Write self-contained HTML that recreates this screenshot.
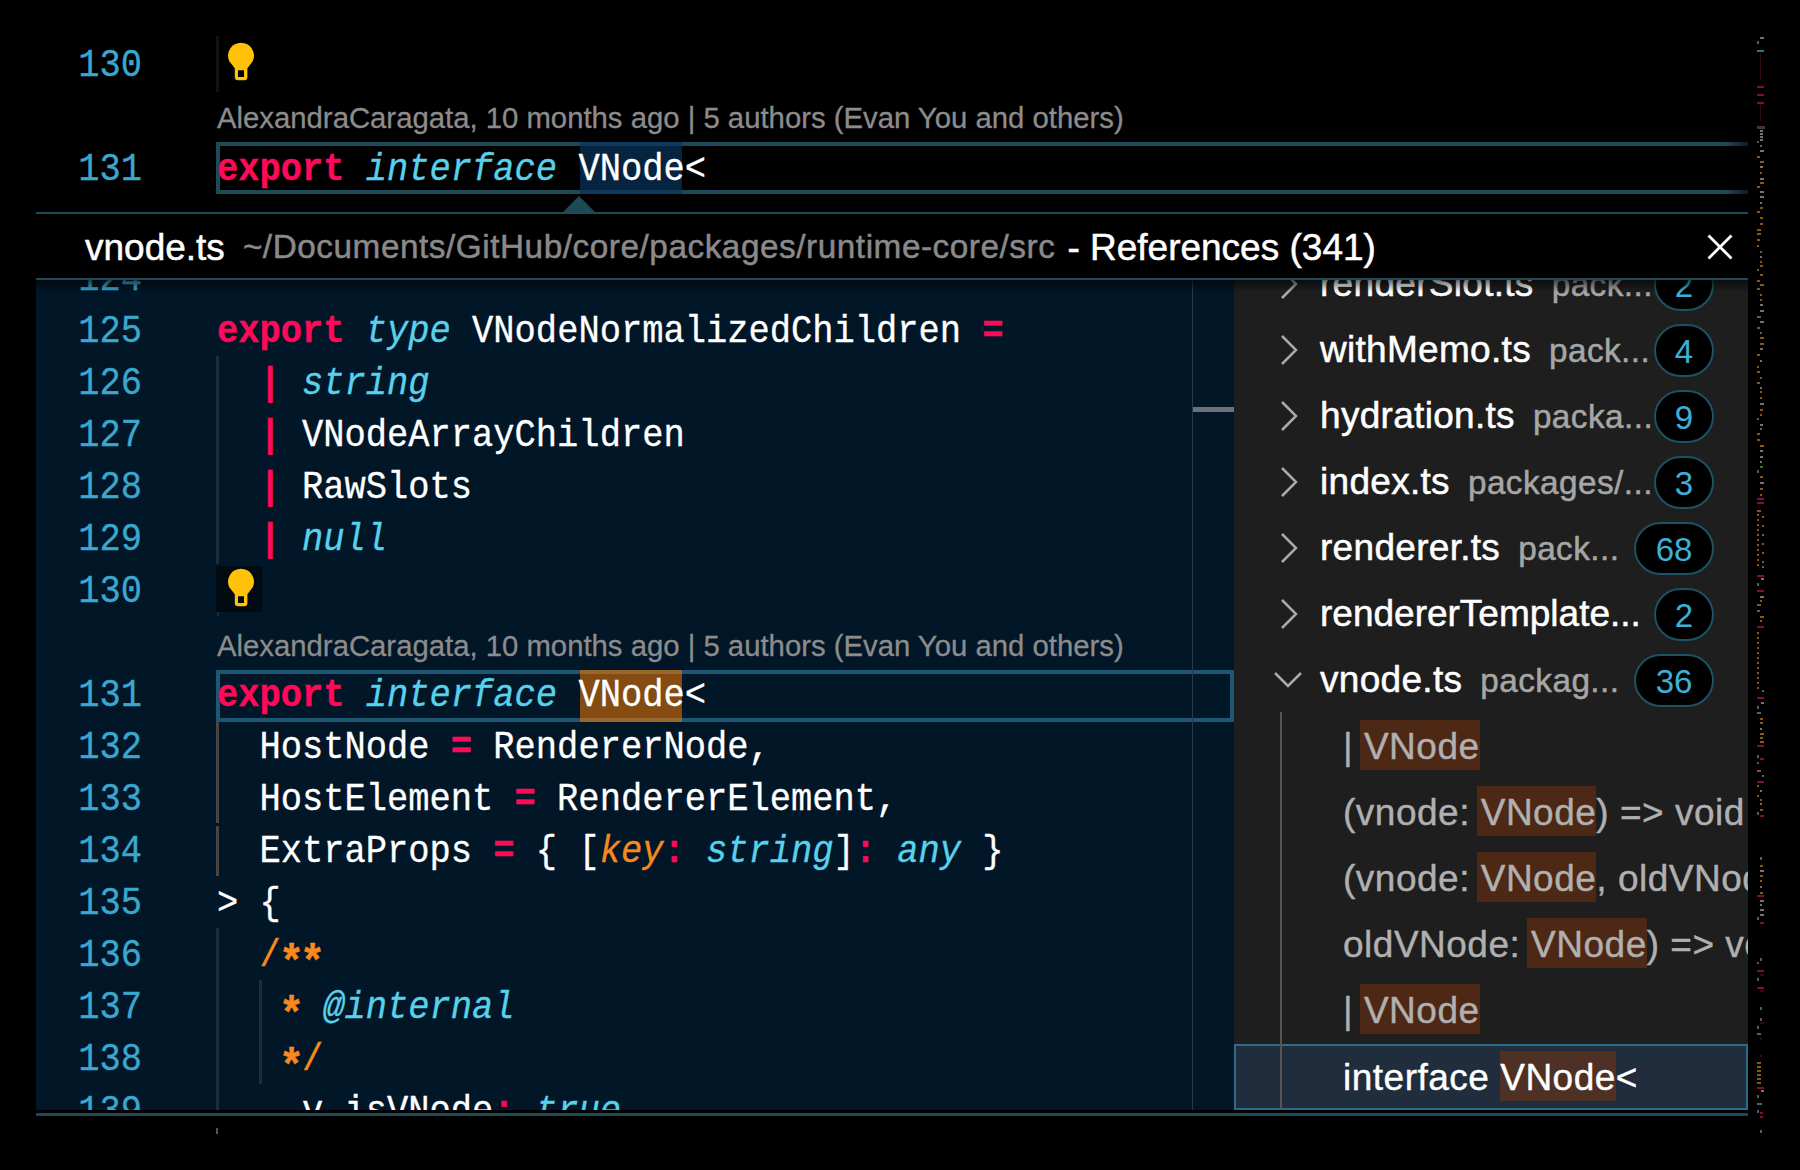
<!DOCTYPE html>
<html><head><meta charset="utf-8">
<style>
*{margin:0;padding:0;box-sizing:border-box}
html,body{width:1800px;height:1170px;background:#000;overflow:hidden;position:relative}
.mono{font-family:"Liberation Mono",monospace;font-size:35.43px;white-space:pre;-webkit-text-stroke:0.3px currentColor;transform-origin:0 11.8px;transform:translateY(0.8px) scaleY(1.108)}
.sans{font-family:"Liberation Sans",sans-serif;white-space:pre;-webkit-text-stroke:0.5px currentColor}
.ln{position:absolute;left:0;width:142px;text-align:right;color:#3ba7cf;height:52px;line-height:52px}
.cl{position:absolute;left:217px;height:52px;line-height:52px;color:#fff}
.k{color:#ff0a5a;font-weight:bold}
.i{color:#58d1eb;font-style:italic}
.p{color:#ff0a5a;font-weight:bold}
.o{color:#f7891e}
.ast{display:inline-block;font-weight:bold;transform:translateY(8px) scale(1.2)}
.oi{color:#f7891e;font-style:italic}
.abs{position:absolute}
.lens{-webkit-text-stroke:0.3px currentColor;position:absolute;left:217px;font-family:"Liberation Sans",sans-serif;font-size:29.3px;color:#8c8c8c;white-space:pre;height:52px;line-height:52px}
.guide{position:absolute;width:2px;background:#1f2c36}
.row{position:absolute;left:1235px;width:513px;height:66px}
.chev{position:absolute;left:1281px;width:16px;height:28px}
.fname{-webkit-text-stroke:0.5px currentColor;position:absolute;left:1320px;height:66px;line-height:66px;font-size:37px;letter-spacing:0.3px;color:#fff;font-family:"Liberation Sans",sans-serif;white-space:pre}
.desc{font-size:33.3px;color:#a6a6a6;margin-left:18px;letter-spacing:0.45px}
.badge{position:absolute;height:53px;border:2px solid #1d5264;border-radius:27px;background:#000;color:#3db0d8;font-family:"Liberation Sans",sans-serif;font-size:33px;line-height:51px;text-align:center;padding:0;min-width:58px}
.child{-webkit-text-stroke:0.4px currentColor;letter-spacing:0.5px;position:absolute;left:1343px;height:66px;line-height:68px;font-size:37px;color:#b0b0b0;font-family:"Liberation Sans",sans-serif;white-space:pre}
.hl{background:#4d2815;display:inline-block;height:50px;line-height:53px;vertical-align:top;margin-top:7px;margin-left:-4px;padding-left:4px}
</style></head><body>

<!-- top editor -->
<div class="guide" style="left:216px;top:36px;width:3px;height:56px;background:#121212"></div><div class="abs" style="left:216px;top:1128px;width:2px;height:6px;background:#555"></div>
<div class="mono ln" style="top:38px">130</div>
<svg class="abs" style="left:226px;top:40px" width="30" height="42" viewBox="0 0 30 42"><path fill-rule="evenodd" fill="#ffc10a" d="M3.1,21 A13,13 0 1 1 26.9,21 L21.4,28.3 L21.4,37.2 Q21.4,40.2 18.4,40.2 L11.8,40.2 Q8.8,40.2 8.8,37.2 L8.8,28.3 Z M12,30.2 H18 V37 H12 Z"/></svg>
<div class="lens" style="top:92px">AlexandraCaragata, 10 months ago | 5 authors (Evan You and others)</div>
<div class="abs" style="left:216px;top:142px;width:4px;height:52px;background:#1e4a58"></div><div class="abs" style="left:216px;top:142px;width:1532px;height:4px;background:linear-gradient(90deg,#1e4a58 0,#1e4a58 1510px,#0b1c22 1532px)"></div><div class="abs" style="left:216px;top:190px;width:1532px;height:4px;background:linear-gradient(90deg,#1e4a58 0,#1e4a58 1510px,#0b1c22 1532px)"></div>
<div class="abs" style="left:580px;top:142px;width:102px;height:52px;background:#06243f;border-top:4px solid #0e3a5e;border-bottom:4px solid #0e3a5e"></div>
<div class="mono ln" style="top:142px">131</div>
<div class="mono cl" style="top:142px"><span class="k">export</span> <span class="i">interface</span> VNode&lt;</div>

<!-- peek widget borders -->
<svg class="abs" style="left:562px;top:196px" width="34" height="17"><path d="M0 17 L17 0 L34 17 Z" fill="#1e4a58"/></svg>
<div class="abs" style="left:36px;top:212px;width:1712px;height:2px;background:#1e4a58"></div>
<div class="abs" style="left:36px;top:214px;width:1712px;height:64px;background:#000"></div>
<div class="abs" style="left:36px;top:278px;width:1712px;height:2px;background:#1e4a58"></div>
<div class="abs sans" style="left:85px;top:215px;height:64px;line-height:66px;font-size:37px;color:#fff">vnode.ts<span style="font-size:33.3px;color:#8a8a8a;margin-left:18px;letter-spacing:0.55px;position:relative;top:-2px">~/Documents/GitHub/core/packages/runtime-core/src</span><span style="margin-left:12px">- References (341)</span></div>
<svg class="abs" style="left:1707px;top:234px" width="26" height="26"><path d="M1.5 1.5 L24.5 24.5 M24.5 1.5 L1.5 24.5" stroke="#fff" stroke-width="2.8"/></svg>

<!-- peek body -->
<div class="abs" style="left:36px;top:280px;width:1198px;height:830px;background:#011627;overflow:hidden" id="peek">
<div class="abs" style="left:-36px;top:-280px;width:1800px;height:1170px">
<div class="guide" style="left:216px;width:3px;top:356px;height:208px"></div>
<div class="guide" style="left:217px;top:612px;height:4px"></div>
<div class="mono ln" style="top:252px">124</div>
<div class="mono ln" style="top:304px">125</div>
<div class="mono cl" style="top:304px"><span class="k">export</span> <span class="i">type</span> VNodeNormalizedChildren <span class="p">=</span></div>
<div class="mono ln" style="top:356px">126</div>
<div class="mono cl" style="top:356px">  <span class="p">|</span> <span class="i">string</span></div>
<div class="mono ln" style="top:408px">127</div>
<div class="mono cl" style="top:408px">  <span class="p">|</span> VNodeArrayChildren</div>
<div class="mono ln" style="top:460px">128</div>
<div class="mono cl" style="top:460px">  <span class="p">|</span> RawSlots</div>
<div class="mono ln" style="top:512px">129</div>
<div class="mono cl" style="top:512px">  <span class="p">|</span> <span class="i">null</span></div>
<div class="mono ln" style="top:564px">130</div>
<div class="abs" style="left:216px;top:566px;width:46px;height:46px;background:#020b12"></div>
<svg class="abs" style="left:226px;top:566px" width="30" height="42" viewBox="0 0 30 42"><path fill-rule="evenodd" fill="#ffc10a" d="M3.1,21 A13,13 0 1 1 26.9,21 L21.4,28.3 L21.4,37.2 Q21.4,40.2 18.4,40.2 L11.8,40.2 Q8.8,40.2 8.8,37.2 L8.8,28.3 Z M12,30.2 H18 V37 H12 Z"/></svg>
<div class="lens" style="top:620px">AlexandraCaragata, 10 months ago | 5 authors (Evan You and others)</div>
<div class="abs" style="left:216px;top:670px;width:1018px;height:52px;border:4px solid #1f5673"></div>
<div class="abs" style="left:580px;top:670px;width:102px;height:52px;background:#844c12;border-top:4px solid #98682a;border-bottom:4px solid #98682a"></div>
<div class="mono ln" style="top:668px">131</div>
<div class="mono cl" style="top:668px"><span class="k">export</span> <span class="i">interface</span> VNode&lt;</div>
<div class="guide" style="left:216px;width:3px;top:722px;height:101px;background:#4a4545"></div><div class="guide" style="left:216px;width:3px;top:826px;height:50px;background:#4a4545"></div>
<div class="mono ln" style="top:720px">132</div>
<div class="mono cl" style="top:720px">  HostNode <span class="p">=</span> RendererNode,</div>
<div class="mono ln" style="top:772px">133</div>
<div class="mono cl" style="top:772px">  HostElement <span class="p">=</span> RendererElement,</div>
<div class="mono ln" style="top:824px">134</div>
<div class="mono cl" style="top:824px">  ExtraProps <span class="p">=</span> { [<span class="oi">key</span><span class="p">:</span> <span class="i">string</span>]<span class="p">:</span> <span class="i">any</span> }</div>
<div class="mono ln" style="top:876px">135</div>
<div class="mono cl" style="top:876px">&gt; {</div>
<div class="guide" style="left:216px;width:3px;top:928px;height:200px"></div>
<div class="guide" style="left:259px;width:3px;top:980px;height:104px"></div>
<div class="mono ln" style="top:928px">136</div>
<div class="mono cl" style="top:928px">  <span class="o">/<span class="ast">*</span><span class="ast">*</span></span></div>
<div class="mono ln" style="top:980px">137</div>
<div class="mono cl" style="top:980px">   <span class="o"><span class="ast">*</span></span> <span class="i">@internal</span></div>
<div class="mono ln" style="top:1032px">138</div>
<div class="mono cl" style="top:1032px">   <span class="o"><span class="ast">*</span>/</span></div>
<div class="mono ln" style="top:1084px">139</div>
<div class="mono cl" style="top:1084px">  __v_isVNode<span class="p">:</span> <span class="i">true</span></div>
<div class="abs" style="left:1192px;top:280px;width:1px;height:830px;background:#2a3a44"></div>
<div class="abs" style="left:1193px;top:407px;width:41px;height:5px;background:#6b7178"></div>
</div>
<div class="abs" style="left:0;top:0;width:1199px;height:12px;background:linear-gradient(#0009,#0000)"></div>
</div>
<div class="abs" style="left:1234px;top:280px;width:514px;height:830px;background:#1e1e1e;overflow:hidden" id="tree">
<div class="abs" style="left:-1234px;top:-280px;width:1800px;height:1170px">
<svg class="abs" style="left:1279px;top:269px" width="20" height="30"><path d="M3 1 L17 15 L3 29" fill="none" stroke="#aaa" stroke-width="2.5"/></svg>
<div class="fname" style="top:251px">renderSlot.ts<span class="desc">pack...</span></div>
<div class="badge" style="left:1654px;top:258px;width:60px">2</div>
<svg class="abs" style="left:1279px;top:335px" width="20" height="30"><path d="M3 1 L17 15 L3 29" fill="none" stroke="#aaa" stroke-width="2.5"/></svg>
<div class="fname" style="top:317px">withMemo.ts<span class="desc">pack...</span></div>
<div class="badge" style="left:1654px;top:324px;width:60px">4</div>
<svg class="abs" style="left:1279px;top:401px" width="20" height="30"><path d="M3 1 L17 15 L3 29" fill="none" stroke="#aaa" stroke-width="2.5"/></svg>
<div class="fname" style="top:383px">hydration.ts<span class="desc">packa...</span></div>
<div class="badge" style="left:1654px;top:390px;width:60px">9</div>
<svg class="abs" style="left:1279px;top:467px" width="20" height="30"><path d="M3 1 L17 15 L3 29" fill="none" stroke="#aaa" stroke-width="2.5"/></svg>
<div class="fname" style="top:449px">index.ts<span class="desc">packages/...</span></div>
<div class="badge" style="left:1654px;top:456px;width:60px">3</div>
<svg class="abs" style="left:1279px;top:533px" width="20" height="30"><path d="M3 1 L17 15 L3 29" fill="none" stroke="#aaa" stroke-width="2.5"/></svg>
<div class="fname" style="top:515px">renderer.ts<span class="desc">pack...</span></div>
<div class="badge" style="left:1634px;top:522px;width:80px">68</div>
<svg class="abs" style="left:1279px;top:599px" width="20" height="30"><path d="M3 1 L17 15 L3 29" fill="none" stroke="#aaa" stroke-width="2.5"/></svg>
<div class="fname" style="top:581px;letter-spacing:0">rendererTemplate...</div>
<div class="badge" style="left:1654px;top:588px;width:60px">2</div>
<svg class="abs" style="left:1273px;top:671px" width="30" height="18"><path d="M2 2 L15 15 L28 2" fill="none" stroke="#aaa" stroke-width="2.5"/></svg>
<div class="fname" style="top:647px">vnode.ts<span class="desc">packag...</span></div>
<div class="badge" style="left:1634px;top:654px;width:80px">36</div>
<div class="abs" style="left:1234px;top:1044px;width:514px;height:66px;background:#1f2d3d;border:2px solid #2c6a8c"></div>
<div class="abs" style="left:1280px;top:712px;width:2px;height:398px;background:#555"></div>
<div class="child" style="top:713px">| <span class="hl">VNode</span></div>
<div class="child" style="top:779px">(vnode: <span class="hl">VNode</span>) =&gt; void</div>
<div class="child" style="top:845px">(vnode: <span class="hl">VNode</span>, oldVNode</div>
<div class="child" style="top:911px">oldVNode: <span class="hl">VNode</span>) =&gt; void</div>
<div class="child" style="top:977px">| <span class="hl">VNode</span></div>
<div class="child" style="top:1044px;color:#fff">interface <span class="hl" style="background:#4f3024;margin-left:0;padding-left:0">VNode</span>&lt;</div>
</div>
<div class="abs" style="left:0;top:0;width:514px;height:12px;background:linear-gradient(#0009,#0000)"></div>
</div>
<div class="abs" style="left:36px;top:1113px;width:1712px;height:3px;background:#1e4a58"></div>

<svg class="abs" style="left:1750px;top:0;opacity:0.75;filter:blur(0.4px)" width="20" height="1170" viewBox="1750 0 20 1170"><rect x="1760" y="37" width="4" height="2" fill="#9a9a9a"/><rect x="1757" y="41" width="2" height="3" fill="#777"/><rect x="1757" y="50" width="7" height="2" fill="#3a9ab8"/><rect x="1760" y="53" width="1" height="27" fill="#4a0a20"/><rect x="1757" y="86" width="7" height="2" fill="#b0104a"/><rect x="1757" y="94" width="7" height="2" fill="#b0104a"/><rect x="1757" y="102" width="7" height="2" fill="#b0104a"/><rect x="1760" y="104" width="1" height="17" fill="#4a0a20"/><rect x="1757" y="126" width="8" height="3" fill="#6a3a6a"/><rect x="1760" y="130" width="3" height="2" fill="#9a9a9a"/><rect x="1760" y="133" width="3" height="2" fill="#9a9a9a"/><rect x="1760" y="136" width="3" height="2" fill="#9a9a9a"/><rect x="1760" y="139" width="3" height="2" fill="#9a9a9a"/><rect x="1757" y="141" width="2" height="2" fill="#777"/><rect x="1760" y="145" width="2" height="2" fill="#b8741f"/><rect x="1760" y="150" width="4" height="2" fill="#9a9a9a"/><rect x="1757" y="156" width="3" height="2" fill="#b8741f"/><rect x="1760" y="161" width="4" height="2" fill="#b8741f"/><rect x="1760" y="166" width="3" height="2" fill="#9a9a9a"/><rect x="1760" y="172" width="2" height="2" fill="#b8741f"/><rect x="1760" y="178" width="4" height="2" fill="#9a9a9a"/><rect x="1760" y="182" width="4" height="2" fill="#b8741f"/><rect x="1757" y="186" width="3" height="2" fill="#b8741f"/><rect x="1760" y="191" width="4" height="2" fill="#9a9a9a"/><rect x="1760" y="196" width="4" height="2" fill="#9a9a9a"/><rect x="1760" y="202" width="2" height="2" fill="#9a9a9a"/><rect x="1760" y="207" width="3" height="2" fill="#b8741f"/><rect x="1757" y="211" width="3" height="2" fill="#b8741f"/><rect x="1760" y="217" width="3" height="2" fill="#b8741f"/><rect x="1760" y="223" width="3" height="2" fill="#b8741f"/><rect x="1757" y="229" width="4" height="2" fill="#b8741f"/><rect x="1757" y="233" width="4" height="2" fill="#b8741f"/><rect x="1757" y="239" width="3" height="2" fill="#b8741f"/><rect x="1757" y="245" width="2" height="2" fill="#b8741f"/><rect x="1760" y="251" width="2" height="2" fill="#b8741f"/><rect x="1760" y="256" width="2" height="2" fill="#9a9a9a"/><rect x="1760" y="261" width="2" height="2" fill="#b8741f"/><rect x="1760" y="265" width="3" height="2" fill="#b8741f"/><rect x="1757" y="269" width="2" height="2" fill="#b8741f"/><rect x="1760" y="274" width="3" height="2" fill="#b8741f"/><rect x="1757" y="280" width="3" height="2" fill="#b8741f"/><rect x="1760" y="284" width="4" height="2" fill="#b8741f"/><rect x="1757" y="288" width="3" height="2" fill="#b8741f"/><rect x="1760" y="294" width="2" height="2" fill="#b8741f"/><rect x="1760" y="299" width="2" height="2" fill="#b8741f"/><rect x="1760" y="304" width="3" height="2" fill="#9a9a9a"/><rect x="1760" y="310" width="4" height="2" fill="#9a9a9a"/><rect x="1757" y="316" width="4" height="2" fill="#b8741f"/><rect x="1760" y="321" width="4" height="2" fill="#9a9a9a"/><rect x="1757" y="327" width="3" height="2" fill="#b8741f"/><rect x="1760" y="332" width="2" height="2" fill="#b8741f"/><rect x="1760" y="337" width="4" height="2" fill="#b8741f"/><rect x="1760" y="343" width="4" height="2" fill="#b8741f"/><rect x="1760" y="348" width="3" height="2" fill="#9a9a9a"/><rect x="1757" y="354" width="3" height="2" fill="#b8741f"/><rect x="1760" y="360" width="2" height="2" fill="#9a9a9a"/><rect x="1757" y="366" width="2" height="2" fill="#b8741f"/><rect x="1757" y="371" width="3" height="2" fill="#b8741f"/><rect x="1760" y="377" width="2" height="2" fill="#b8741f"/><rect x="1757" y="382" width="3" height="2" fill="#b8741f"/><rect x="1760" y="387" width="2" height="2" fill="#9a9a9a"/><rect x="1760" y="391" width="2" height="2" fill="#b8741f"/><rect x="1760" y="397" width="2" height="2" fill="#b8741f"/><rect x="1760" y="403" width="4" height="2" fill="#9a9a9a"/><rect x="1760" y="409" width="3" height="2" fill="#b8741f"/><rect x="1760" y="414" width="2" height="2" fill="#b8741f"/><rect x="1757" y="418" width="2" height="2" fill="#b8741f"/><rect x="1760" y="424" width="3" height="2" fill="#9a9a9a"/><rect x="1760" y="428" width="2" height="2" fill="#b8741f"/><rect x="1757" y="433" width="3" height="2" fill="#b8741f"/><rect x="1757" y="439" width="3" height="2" fill="#b8741f"/><rect x="1760" y="445" width="4" height="2" fill="#b8741f"/><rect x="1760" y="450" width="3" height="2" fill="#9a9a9a"/><rect x="1760" y="456" width="3" height="2" fill="#9a9a9a"/><rect x="1760" y="461" width="2" height="2" fill="#9a9a9a"/><rect x="1760" y="466" width="3" height="2" fill="#5a9a20"/><rect x="1757" y="470" width="2" height="3" fill="#777"/><rect x="1760" y="476" width="3" height="2" fill="#b8741f"/><rect x="1760" y="482" width="4" height="2" fill="#9a9a9a"/><rect x="1760" y="488" width="3" height="2" fill="#b8741f"/><rect x="1760" y="494" width="2" height="2" fill="#b8741f"/><rect x="1757" y="498" width="7" height="2" fill="#b0104a"/><rect x="1757" y="502" width="7" height="2" fill="#b0104a"/><rect x="1757" y="510" width="4" height="2" fill="#b8741f"/><rect x="1757" y="514" width="2" height="2" fill="#b8741f"/><rect x="1757" y="519" width="2" height="2" fill="#b8741f"/><rect x="1757" y="524" width="2" height="2" fill="#b8741f"/><rect x="1757" y="529" width="2" height="2" fill="#b8741f"/><rect x="1757" y="534" width="2" height="2" fill="#b8741f"/><rect x="1757" y="539" width="2" height="2" fill="#b8741f"/><rect x="1757" y="544" width="2" height="2" fill="#b8741f"/><rect x="1757" y="549" width="2" height="2" fill="#b8741f"/><rect x="1757" y="554" width="2" height="2" fill="#b8741f"/><rect x="1757" y="559" width="2" height="2" fill="#b8741f"/><rect x="1757" y="564" width="2" height="2" fill="#b8741f"/><rect x="1762" y="516" width="2" height="2" fill="#b8741f"/><rect x="1762" y="525" width="2" height="2" fill="#b8741f"/><rect x="1762" y="534" width="2" height="2" fill="#b8741f"/><rect x="1762" y="543" width="2" height="2" fill="#b8741f"/><rect x="1762" y="552" width="2" height="2" fill="#b8741f"/><rect x="1762" y="561" width="2" height="2" fill="#b8741f"/><rect x="1762" y="566" width="2" height="2" fill="#3a9ab8"/><rect x="1757" y="575" width="7" height="2" fill="#b0104a"/><rect x="1761" y="578" width="3" height="2" fill="#9a9a9a"/><rect x="1757" y="583" width="2" height="3" fill="#777"/><rect x="1757" y="590" width="7" height="2" fill="#b0104a"/><rect x="1760" y="596" width="4" height="2" fill="#9a9a9a"/><rect x="1760" y="600" width="2" height="2" fill="#b8741f"/><rect x="1757" y="604" width="4" height="2" fill="#b8741f"/><rect x="1757" y="610" width="3" height="2" fill="#b8741f"/><rect x="1760" y="616" width="4" height="2" fill="#b8741f"/><rect x="1760" y="620" width="2" height="2" fill="#b8741f"/><rect x="1757" y="626" width="7" height="2" fill="#b0104a"/><rect x="1757" y="632" width="2" height="2" fill="#b8741f"/><rect x="1757" y="637" width="2" height="2" fill="#b8741f"/><rect x="1757" y="642" width="2" height="2" fill="#b8741f"/><rect x="1757" y="647" width="2" height="2" fill="#b8741f"/><rect x="1757" y="652" width="2" height="2" fill="#b8741f"/><rect x="1757" y="657" width="2" height="2" fill="#b8741f"/><rect x="1757" y="662" width="2" height="2" fill="#b8741f"/><rect x="1757" y="667" width="2" height="2" fill="#b8741f"/><rect x="1757" y="672" width="2" height="2" fill="#b8741f"/><rect x="1757" y="677" width="2" height="2" fill="#b8741f"/><rect x="1757" y="682" width="2" height="2" fill="#b8741f"/><rect x="1757" y="687" width="2" height="2" fill="#b8741f"/><rect x="1762" y="690" width="2" height="2" fill="#3a9ab8"/><rect x="1757" y="697" width="7" height="2" fill="#b0104a"/><rect x="1761" y="702" width="3" height="2" fill="#9a9a9a"/><rect x="1757" y="706" width="2" height="3" fill="#777"/><rect x="1757" y="712" width="4" height="2" fill="#3a9ab8"/><rect x="1760" y="718" width="3" height="2" fill="#b8741f"/><rect x="1760" y="722" width="3" height="2" fill="#b8741f"/><rect x="1760" y="728" width="2" height="2" fill="#9a9a9a"/><rect x="1760" y="733" width="4" height="2" fill="#b8741f"/><rect x="1760" y="737" width="3" height="2" fill="#b8741f"/><rect x="1760" y="741" width="4" height="2" fill="#b8741f"/><rect x="1757" y="745" width="7" height="2" fill="#b0104a"/><rect x="1757" y="755" width="2" height="3" fill="#777"/><rect x="1760" y="758" width="4" height="2" fill="#b0104a"/><rect x="1757" y="762" width="2" height="2" fill="#777"/><rect x="1757" y="770" width="4" height="2" fill="#b8741f"/><rect x="1762" y="775" width="2" height="2" fill="#3a9ab8"/><rect x="1757" y="781" width="7" height="2" fill="#b0104a"/><rect x="1757" y="785" width="2" height="2" fill="#b8741f"/><rect x="1760" y="790" width="2" height="2" fill="#9a9a9a"/><rect x="1757" y="795" width="2" height="2" fill="#b8741f"/><rect x="1760" y="799" width="2" height="2" fill="#b8741f"/><rect x="1760" y="803" width="2" height="2" fill="#9a9a9a"/><rect x="1760" y="809" width="3" height="2" fill="#b8741f"/><rect x="1757" y="812" width="2" height="3" fill="#777"/><rect x="1760" y="815" width="4" height="2" fill="#b0104a"/><rect x="1760" y="857" width="2" height="3" fill="#777"/><rect x="1760" y="865" width="3" height="2" fill="#b8741f"/><rect x="1760" y="870" width="4" height="2" fill="#9a9a9a"/><rect x="1760" y="875" width="3" height="2" fill="#b8741f"/><rect x="1760" y="880" width="2" height="2" fill="#b8741f"/><rect x="1760" y="886" width="2" height="2" fill="#9a9a9a"/><rect x="1760" y="892" width="3" height="2" fill="#b8741f"/><rect x="1757" y="895" width="7" height="2" fill="#b0104a"/><rect x="1760" y="900" width="4" height="2" fill="#9a9a9a"/><rect x="1760" y="904" width="2" height="2" fill="#9a9a9a"/><rect x="1760" y="909" width="4" height="2" fill="#9a9a9a"/><rect x="1760" y="914" width="4" height="2" fill="#9a9a9a"/><rect x="1757" y="917" width="2" height="3" fill="#777"/><rect x="1760" y="922" width="4" height="2" fill="#b0104a"/><rect x="1760" y="958" width="2" height="3" fill="#777"/><rect x="1757" y="962" width="2" height="2" fill="#777"/><rect x="1757" y="970" width="7" height="2" fill="#b0104a"/><rect x="1760" y="974" width="4" height="2" fill="#4a0a20"/><rect x="1757" y="978" width="2" height="3" fill="#777"/><rect x="1757" y="987" width="7" height="2" fill="#b0104a"/><rect x="1760" y="990" width="4" height="2" fill="#4a0a20"/><rect x="1760" y="1007" width="2" height="3" fill="#777"/><rect x="1760" y="1018" width="2" height="3" fill="#777"/><rect x="1760" y="1022" width="4" height="2" fill="#4a0a20"/><rect x="1757" y="1026" width="2" height="3" fill="#777"/><rect x="1757" y="1033" width="4" height="2" fill="#3a9ab8"/><rect x="1760" y="1038" width="2" height="2" fill="#4a0a20"/><rect x="1760" y="1055" width="2" height="2" fill="#4a0a20"/><rect x="1757" y="1062" width="4" height="2" fill="#b8741f"/><rect x="1757" y="1066" width="4" height="2" fill="#b8741f"/><rect x="1757" y="1070" width="4" height="2" fill="#b8741f"/><rect x="1757" y="1074" width="4" height="2" fill="#b8741f"/><rect x="1757" y="1078" width="4" height="2" fill="#b8741f"/><rect x="1757" y="1082" width="4" height="2" fill="#b8741f"/><rect x="1757" y="1087" width="7" height="2" fill="#b0104a"/><rect x="1761" y="1090" width="3" height="2" fill="#9a9a9a"/><rect x="1757" y="1095" width="2" height="3" fill="#777"/><rect x="1757" y="1103" width="5" height="2" fill="#3a9ab8"/><rect x="1757" y="1110" width="2" height="3" fill="#777"/><rect x="1760" y="1112" width="3" height="2" fill="#b0104a"/><rect x="1760" y="1116" width="3" height="2" fill="#b0104a"/><rect x="1760" y="1130" width="2" height="3" fill="#777"/></svg>
</body></html>
